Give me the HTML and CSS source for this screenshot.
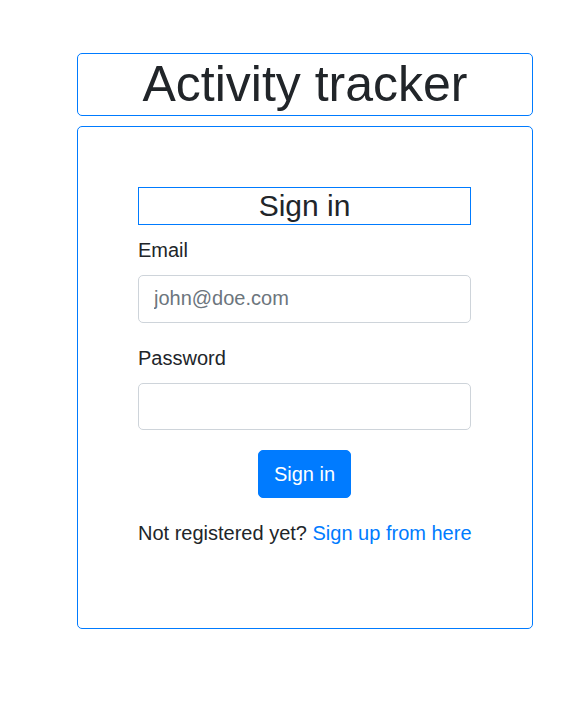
FILE: index.html
```html
<!DOCTYPE html>
<html lang="en">
<head>
<meta charset="utf-8">
<title>Activity tracker</title>
<link rel="stylesheet" href="styles.css">
</head>
<body>
<div class="wrap">
  <h1 class="app-title">Activity tracker</h1>
  <div class="card">
    <form class="signin">
      <h4 class="signin-title">Sign in</h4>
      <div class="group">
        <label class="label" for="email">Email</label>
        <input class="input" id="email" type="email" placeholder="john@doe.com">
      </div>
      <div class="group">
        <label class="label" for="password">Password</label>
        <input class="input" id="password" type="password">
      </div>
      <div class="actions">
        <button type="button" class="btn">Sign in</button>
      </div>
      <p class="note">Not registered yet? <a href="#" class="link">Sign up from here</a></p>
    </form>
  </div>
</div>
</body>
</html>
```

FILE: styles.css
```css
* { box-sizing: border-box; }
html, body {
  margin: 0;
  padding: 0;
  background: #fff;
}
body {
  font-family: "Liberation Sans", Arial, sans-serif;
  font-size: 20px;
  line-height: 1.5;
  color: #212529;
}
.wrap {
  width: 456px;
  margin-left: 77px;
  padding-top: 53px;
}
.app-title {
  margin: 0 0 10px;
  border: 1px solid #007bff;
  border-radius: 5px;
  font-size: 50px;
  font-weight: 400;
  line-height: 61px;
  text-align: center;
  color: #212529;
}
.card {
  border: 1px solid #007bff;
  border-radius: 5px;
  padding: 60px 61px 60px 60px;
}
.signin {
  display: flex;
  flex-direction: column;
}
.signin-title {
  margin: 0 0 10px;
  border: 1px solid #007bff;
  font-size: 30px;
  font-weight: 400;
  line-height: 36px;
  text-align: center;
}
.group {
  display: flex;
  flex-direction: column;
  margin-bottom: 20px;
}
.label {
  display: block;
  margin-bottom: 10px;
  line-height: 30px;
}
.input {
  display: block;
  width: 100%;
  height: 47.5px;
  padding: 7.5px 15px;
  font-family: inherit;
  font-size: 20px;
  line-height: 30px;
  color: #495057;
  background: #fff;
  border: 1px solid #ced4da;
  border-radius: 5px;
  outline: none;
}
.input::placeholder {
  color: #6c757d;
  opacity: 1;
}
.actions {
  display: flex;
  justify-content: center;
  margin-bottom: 20px;
}
.btn {
  font-family: inherit;
  font-size: 20px;
  line-height: 30px;
  padding: 8px 15px;
  color: #fff;
  background: #007bff;
  border: 1px solid #007bff;
  border-radius: 5px;
}
.note {
  margin: 0 0 20px;
  line-height: 30px;
  white-space: nowrap;
}
.link {
  color: #007bff;
  text-decoration: none;
}
```
